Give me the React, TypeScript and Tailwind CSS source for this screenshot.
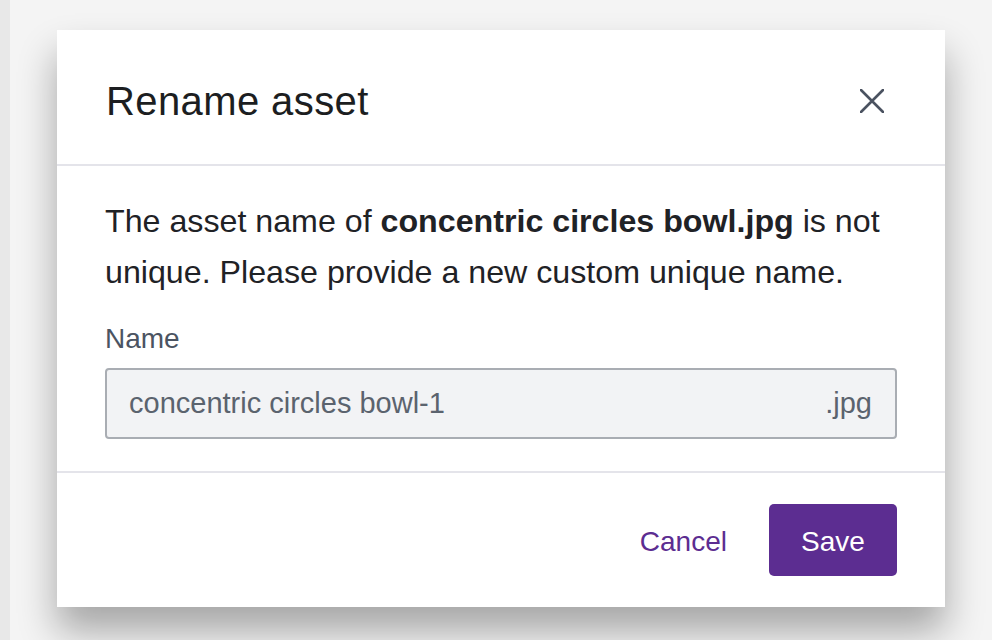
export default function App() {
  return (
    <div
      className="flex h-[640px] w-[992px] overflow-hidden bg-[#f4f4f4]"
      style={{ fontFamily: '"Liberation Sans", Arial, sans-serif' }}
    >
      <div className="h-full w-[10px] shrink-0 bg-[#e8e8e8]" />
      <div className="pl-[47px] pt-[30px]">
        <div className="flex h-[577px] w-[888px] flex-col bg-white shadow-[0_24px_36px_rgba(0,0,0,0.32)]">
          <div className="flex h-[136px] shrink-0 items-center justify-between border-b-2 border-[#e4e4ea] pl-[49px] pr-[60px] pt-[7px]">
            <h2 className="text-[40px] leading-none tracking-[0.4px] text-[#1c1e21]">Rename asset</h2>
            <button className="flex h-[26px] w-[26px] items-center justify-center">
              <svg width="24" height="24" viewBox="0 0 24 24" fill="none">
                <path d="M1 1L23 23M23 1L1 23" stroke="#4a5260" strokeWidth="2.6" strokeLinecap="round" />
              </svg>
            </button>
          </div>

          <div className="flex flex-col border-b-2 border-[#e4e4ea] px-[48px] pb-[32px] pt-[30px]">
            <p className="text-[32.2px] leading-[51px] text-[#1f2226]">
              The asset name of <span className="font-bold">concentric circles bowl.jpg</span> is not unique. Please provide a new custom unique name.
            </p>
            <label className="mt-[21px] text-[28px] leading-[40px] text-[#4b5462]">Name</label>
            <div className="mt-[9px] flex h-[71px] items-center justify-between rounded-[4px] border-2 border-[#a9adb3] bg-[#f2f3f5] pl-[22px] pr-[23px]">
              <span className="text-[29px] text-[#5b636e]">concentric circles bowl-1</span>
              <span className="text-[29px] text-[#5b636e]">.jpg</span>
            </div>
          </div>

          <div className="flex flex-1 items-center justify-end gap-[42px] pr-[48px]">
            <button className="pt-[4px] text-[28px] text-[#5c2d91]">Cancel</button>
            <button className="h-[72px] w-[128px] rounded-[5px] bg-[#5c2d91] pt-[4px] text-[28px] text-white">Save</button>
          </div>
        </div>
      </div>
    </div>
  );
}
